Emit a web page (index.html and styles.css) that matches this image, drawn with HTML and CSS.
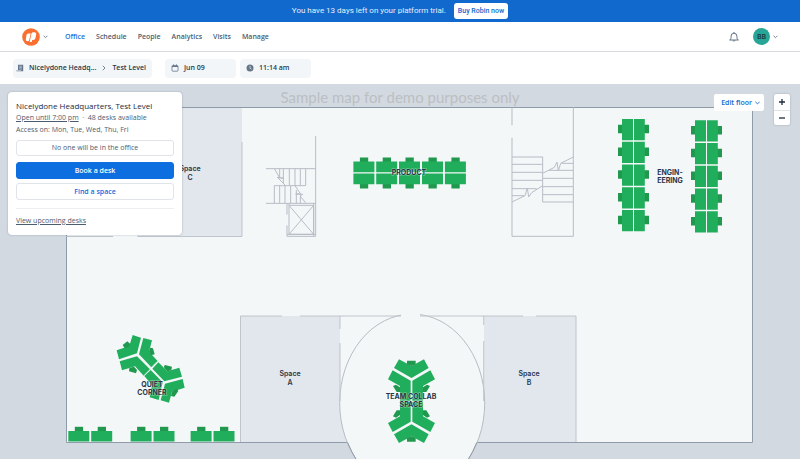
FILE: index.html
```html
<!DOCTYPE html>
<html lang="en">
<head>
<meta charset="utf-8">
<title>Robin – Office</title>
<link rel="stylesheet" href="styles.css">
</head>
<body>
<div class="banner">
  <span>You have 13 days left on your platform trial.</span>
  <button class="buy">Buy Robin now</button>
</div>
<header class="topbar">
  <button class="brand" aria-label="Switch organization">
    <svg width="18" height="18" viewBox="0 0 18 18"><circle cx="9" cy="9" r="8.8" fill="#fa6e30"/><path d="M6.200 5.400h2.500L7.200 12.200a1.800 1.800 0 0 1-3.300-1.500L4.500 7a1.900 1.900 0 0 1 1.700-1.600zM10.800 4.200h1.500a1.900 1.900 0 0 1 1.900 2.400l-.8 3.700a2.100 2.100 0 0 1-2 1.600h-1.200l-.5 2H7.700L9.500 5.400a1.600 1.600 0 0 1 1.300-1.200z" fill="#fff"/></svg>
    <svg width="5" height="4" viewBox="0 0 5 4"><path d="M.6.8l1.900 1.900L4.400.8" class="chev"/></svg>
  </button>
  <nav class="nav">
    <a href="#" class="active">Office</a>
    <a href="#">Schedule</a>
    <a href="#">People</a>
    <a href="#">Analytics</a>
    <a href="#">Visits</a>
    <a href="#">Manage</a>
  </nav>
  <div class="account">
    <button class="bell" aria-label="Notifications">
      <svg width="12" height="12" viewBox="0 0 12 12" fill="none" stroke="#55667a" stroke-width=".9"><path d="M1.300 9h9.400M2.300 8.800c.8-1 .8-2 .8-3.700a2.900 2.900 0 0 1 5.800 0c0 1.700 0 2.700.8 3.700M6 1v1.300"/><path d="M4.900 9.400a1.200 1.200 0 0 0 2.200 0"/></svg>
    </button>
    <button class="profile" aria-label="Account">
      <span class="avatar">BB</span>
      <svg width="5" height="4" viewBox="0 0 5 4"><path d="M.6.8l1.900 1.900L4.400.8" class="chev"/></svg>
    </button>
  </div>
</header>
<div class="filters">
  <button class="chip place">
    <svg width="8" height="8" viewBox="0 0 8 8"><path d="M2 .7h5.200v6.600H.5v-1H2z" fill="#66768a"/><path d="M3.200 2.200h2.600M3.200 3.600h2.600M3.200 5h2.600M1.200 6.500h4" stroke="#f3f6f8" stroke-width=".5"/></svg>
    <span>Nicelydone Headq...</span>
    <svg class="sep" width="4" height="6" viewBox="0 0 4 6"><path d="M.8.800 3 3 .8 5.200" class="chev"/></svg>
    <span>Test Level</span>
  </button>
  <button class="chip date">
    <svg width="8" height="8" viewBox="0 0 8 8"><rect x="1" y="1.500" width="6" height="5.700" rx=".7" fill="none" stroke="#66768a" stroke-width=".8"/><path d="M1 2.500h6M2.600.4v1.400M5.400.4v1.400" stroke="#66768a"/></svg>
    <span>Jun 09</span>
  </button>
  <button class="chip time">
    <svg width="8" height="8" viewBox="0 0 8 8"><circle cx="4" cy="4" r="3.500" fill="#66768a"/><path d="M4 1.800V4.200l1.500.9" fill="none" stroke="#f3f6f8" stroke-width=".7"/></svg>
    <span>11:14 am</span>
  </button>
</div>
<main class="map">
  <svg class="plan" viewBox="0 84 800 375" preserveAspectRatio="xMidYMin slice" role="img" aria-label="Floor map">
    <defs>
      <g id="pod-v">
        <path class="chair" d="M0 5.700h5v8.600H0zM26 5.700h5v8.600h-5z"/>
        <path class="desk" d="M4 0h11v21.200H4zM16 0h10.800v21.200H16z"/>
      </g>
      <g id="pod-h">
        <path class="chair" d="M6.500 0h8.300v5H6.500zM6.500 26h8.300v5H6.500z"/>
        <path class="desk" d="M0 4h21v10.700H0zM0 16h21v10.700H0z"/>
      </g>
      <g id="single">
        <path class="chair" d="M6.500 0h8.300v5H6.500z"/>
        <path class="desk" d="M0 4.200h21v10.500H0z"/>
      </g>
      <g id="half-pod">
        <path class="desk" d="M87 178l37.500 20 37.500-20 14 26-51.500 30L72 204zM68 211l54 31v60H90v-44l-36-20zM181 211l-54 31v60h32v-44l36-20z"/>
        <path class="chair" d="M111 182h26v11l-12.500 5-13.500-5zM69 258l9-4 12 8v14l-10 0zM180 258l-9-4-12 8v14h10z"/>
      </g>
    </defs>
    <text class="sample" x="400" y="103">Sample map for demo purposes only</text>
    <path class="outer" d="M66.500 107.500H752.500V442.500H66.500z"/>
    <path class="room" d="M137.500 108H242V236.500H137.500zM240.500 316H340V442H240.500zM484 316h92V442h-92z"/>
    <path class="room" d="M330 403h20v39h-20zM474 403h20v39h-20z"/>
    <ellipse class="round" cx="412.200" cy="403" rx="72.500" ry="89"/>
    <path class="arc" d="M347.600 442.500Q351.500 452 356.500 460M476.800 442.500Q472.900 452 467.900 460"/>
    <path class="floor" d="M401 311h19v7h-19z"/>
    <path class="wall" d="M242 142V236.500H137.500M113 236.500H66.500M240.500 442V316H282M300 316H401M340 316v13M340 343v58M420 316h103M536 316h40v126M483.700 316v9M483.700 341v60"/>
    <g class="fine" transform="translate(250 100) scale(.33333)">
      <path d="M197 108V409H111V376M111 344V310M48 206H197M48 310H197M167 206V257H73V310M89 206V235M100 206V250M118 206V257M135 206V257M151 206V257M89 257V310M105 257V310M122 257V310M139 270V310M151 290V310M73 206L89 233 102 235 82 232 107 257M135 257L152 282H137L158 283 150 288 167 308M117 316H191V403H117zM117 316L191 403M191 316L117 403M117 310V316M191 310V409M111 403H197"/>
    </g>
    <g class="fine" transform="translate(480 100) scale(.33333)">
      <path d="M96 22V76M96 113V409H280V22M96 171H188V306H280M96 193H188M96 217H188M96 241H188M96 266H170M96 287H132M188 235H280M188 260H280M188 284H280M207 211H280M245 190H280M96 306L135 287 142 264 146 291 155 278 188 257M188 220L223 202 231 186 235 213 242 190 280 171"/>
    </g>
    <use href="#pod-v" x="618" y="119"/><use href="#pod-v" x="618" y="141.700"/><use href="#pod-v" x="618" y="164.500"/><use href="#pod-v" x="618" y="187.300"/><use href="#pod-v" x="618" y="210"/>
    <use href="#pod-v" x="691" y="120.200"/><use href="#pod-v" x="691" y="143"/><use href="#pod-v" x="691" y="165.700"/><use href="#pod-v" x="691" y="188.500"/><use href="#pod-v" x="691" y="211.200"/>
    <use href="#pod-h" x="353.400" y="157.500"/><use href="#pod-h" x="376.200" y="157.500"/><use href="#pod-h" x="399" y="157.500"/><use href="#pod-h" x="422" y="157.500"/><use href="#pod-h" x="444.900" y="157.500"/>
    <use href="#single" x="68.300" y="426.800"/><use href="#single" x="91.200" y="426.800"/><use href="#single" x="130.600" y="426.800"/><use href="#single" x="153.500" y="426.800"/><use href="#single" x="190.600" y="426.800"/><use href="#single" x="213.500" y="426.800"/>
    <g transform="translate(50 320) scale(.33333)">
      <path class="desk" d="M248 45l25 8-12 47-54 18-7-27 38-13zM280 54l26 7-9 34 26 28-19 19-37-39zM209 124l52-15 39 39-19 19-26-28-39 12zM388 143l8 27-53 14-36-38 18-19 27 27zM302 150l36 37-12 53-27-8 7-36-23-28zM398 177l6 26-38 12-9 33-25-7 13-50z"/>
      <path class="chair" d="M218 75l14-11 9 8-3 8-14 5zM300 83l9 2 5 18-11 3-6-11zM238 144l14-4 9 10-3 10-21-6zM342 139l3-4 21 5-2 11-12 3-9-9zM366 215l14-9 5 7-12 17-10-2z"/>
      <path class="seam" d="M323 123l-19 19M300 148l-19 19"/>
    </g>
    <g transform="translate(370 300) scale(.33333)">
      <use href="#half-pod"/><use href="#half-pod" transform="translate(0 607) scale(1 -1)"/>
    </g>
    <g class="label">
      <text x="190" y="171">Space</text><text x="190" y="180">C</text>
      <text x="290" y="376">Space</text><text x="290" y="385">A</text>
      <text x="529" y="376">Space</text><text x="529" y="385">B</text>
    </g>
    <g class="label strong">
      <text x="409" y="175">PRODUCT</text>
      <text x="670" y="175">ENGIN-</text><text x="670" y="183">EERING</text>
      <text x="152" y="387">QUIET</text><text x="152" y="395">CORNER</text>
      <text x="411" y="399">TEAM COLLAB</text><text x="411" y="407">SPACE</text>
    </g>
  </svg>
  <section class="card">
    <h1>Nicelydone Headquarters, Test Level</h1>
    <p><a href="#">Open until 7:00 pm</a> &nbsp;·&nbsp; 48 desks available</p>
    <p>Access on: Mon, Tue, Wed, Thu, Fri</p>
    <button class="btn presence">No one will be in the office</button>
    <button class="btn primary">Book a desk</button>
    <button class="btn link">Find a space</button>
    <hr>
    <a href="#">View upcoming desks</a>
  </section>
  <div class="controls">
    <button class="edit">Edit floor <svg width="5" height="4" viewBox="0 0 5 4"><path d="M.4.800l2.100 2.100L4.600.8" fill="none" stroke="#1168d0" stroke-width=".9"/></svg></button>
    <div class="zoom">
      <button aria-label="Zoom in"><svg width="8" height="8" viewBox="0 0 8 8"><path d="M1 4h6M4 1v6" stroke="#1d2b3c" stroke-width="1.300"/></svg></button>
      <button aria-label="Zoom out"><svg width="8" height="8" viewBox="0 0 8 8"><path d="M1 4h6" stroke="#1d2b3c" stroke-width="1.300"/></svg></button>
    </div>
  </div>
</main>
</body>
</html>
```
FILE: styles.css
```css
* { box-sizing: border-box; }
body {
  margin: 0;
  min-height: 100vh;
  display: flex;
  flex-direction: column;
  font: 7px/12px "Open Sans", "Liberation Sans", sans-serif;
  color: #4c5d70;
}
button {
  margin: 0;
  padding: 0;
  border: 0;
  background: none;
  font: inherit;
  color: inherit;
  cursor: pointer;
}
svg { display: block; }
a { color: inherit; }
.chev { fill: none; stroke: #66768a; stroke-width: .9; }

.banner {
  display: flex;
  align-items: center;
  justify-content: center;
  gap: 8px;
  height: 22px;
  background: #1169ce;
  color: #e4effb;
  font: 8px/12px Roboto, sans-serif;
}
.buy {
  height: 16px;
  padding: 0 4px;
  border-radius: 3px;
  background: #fff;
  color: #1169ce;
  font-size: 7px;
  font-weight: 500;
}
.topbar {
  display: flex;
  align-items: center;
  height: 30px;
  padding: 0 22px;
  border-bottom: 1px solid #d9dcdf;
  background: #fff;
  font-weight: 600;
}
.brand, .profile { display: flex; align-items: center; gap: 3px; }
.nav { display: flex; gap: 11px; margin-left: 17px; }
.nav a { text-decoration: none; }
.nav .active { color: #1a73e0; }
.account { display: flex; align-items: center; gap: 13px; margin-left: auto; }
.avatar {
  width: 17px;
  height: 17px;
  border-radius: 50%;
  background: #27a596;
  color: #17363e;
  line-height: 17px;
  text-align: center;
}
.filters {
  display: flex;
  align-items: center;
  height: 32px;
  padding: 0 13px;
  background: #fff;
}
.chip {
  display: flex;
  align-items: center;
  gap: 5px;
  height: 19px;
  padding: 0 6px;
  border-radius: 4px;
  background: #f3f6f8;
  color: #27384b;
  font-weight: 600;
}
.place { padding-left: 3px; margin-right: 13px; }
.sep { margin: 0 1px; }
.date, .time { width: 71px; }
.date { margin-right: 4px; }

.map { position: relative; flex: 1; min-height: 375px; overflow: hidden; background: #d2d9e1; }
.plan { position: absolute; inset: 0; width: 100%; height: 100%; }
.outer { fill: #f4f7f8; stroke: #8f9ba8; stroke-width: 1; }
.round { fill: #f4f7f8; stroke: #b7bdc6; stroke-width: 1; }
.arc { fill: none; stroke: #8f9ba8; stroke-width: 1; }
.floor { fill: #f4f7f8; }
.room { fill: #e2e6ed; }
.wall { fill: none; stroke: #bfc5cb; stroke-width: 1; }
.fine { fill: none; stroke: #b7bdc6; stroke-width: 3; }
.desk { fill: #21ae5c; }
.chair { fill: #20994f; }
.seam { stroke: #a8dfbf; stroke-width: 2; }
.sample { font: 15px Lato, sans-serif; fill: #bcbfc2; text-anchor: middle; }
.label {
  font: 600 7px Inter, sans-serif;
  fill: #26364a;
  text-anchor: middle;
}
.strong {
  font-weight: 700;
  paint-order: stroke;
  stroke: rgba(244, 247, 248, .5);
  stroke-width: 1px;
}

.card {
  position: absolute;
  top: 8px;
  left: 8px;
  width: 174px;
  padding: 8px;
  display: flex;
  flex-direction: column;
  border-radius: 4px;
  background: #fff;
  box-shadow: 0 0 2px rgba(40, 55, 75, .35);
}
.card h1 { margin: 0; font-size: 8px; line-height: 12px; font-weight: 500; color: #1d2b3c; }
.card p { margin: 0; }
.card > a { align-self: flex-start; }
.btn { height: 16px; line-height: 14px; border: 1px solid #e0e4e8; border-radius: 3px; }
.presence { margin: 4px 0 6px; }
.primary { height: 17px; margin-bottom: 4px; border-color: #0d6ee0; background: #0d6ee0; color: #fff; font-weight: 600; }
.link { height: 17px; color: #0d6ee0; font-weight: 600; }
.card hr { width: 100%; margin: 8px 0 6px; border: 0; border-top: 1px solid #eceef1; }

.controls { position: absolute; top: 10px; right: 10px; display: flex; align-items: flex-start; gap: 10px; }
.edit {
  display: flex;
  align-items: center;
  gap: 3px;
  height: 17px;
  padding: 0 4px 0 7px;
  border-radius: 2px;
  background: #fff;
  color: #1168d0;
  font-weight: 600;
}
.zoom { border-radius: 2px; background: #fff; box-shadow: 0 0 2px rgba(40, 55, 75, .35); }
.zoom button { display: grid; place-items: center; width: 16px; height: 16px; }
.zoom button + button { height: 15px; border-top: 1px solid #e0e4e8; }
```
